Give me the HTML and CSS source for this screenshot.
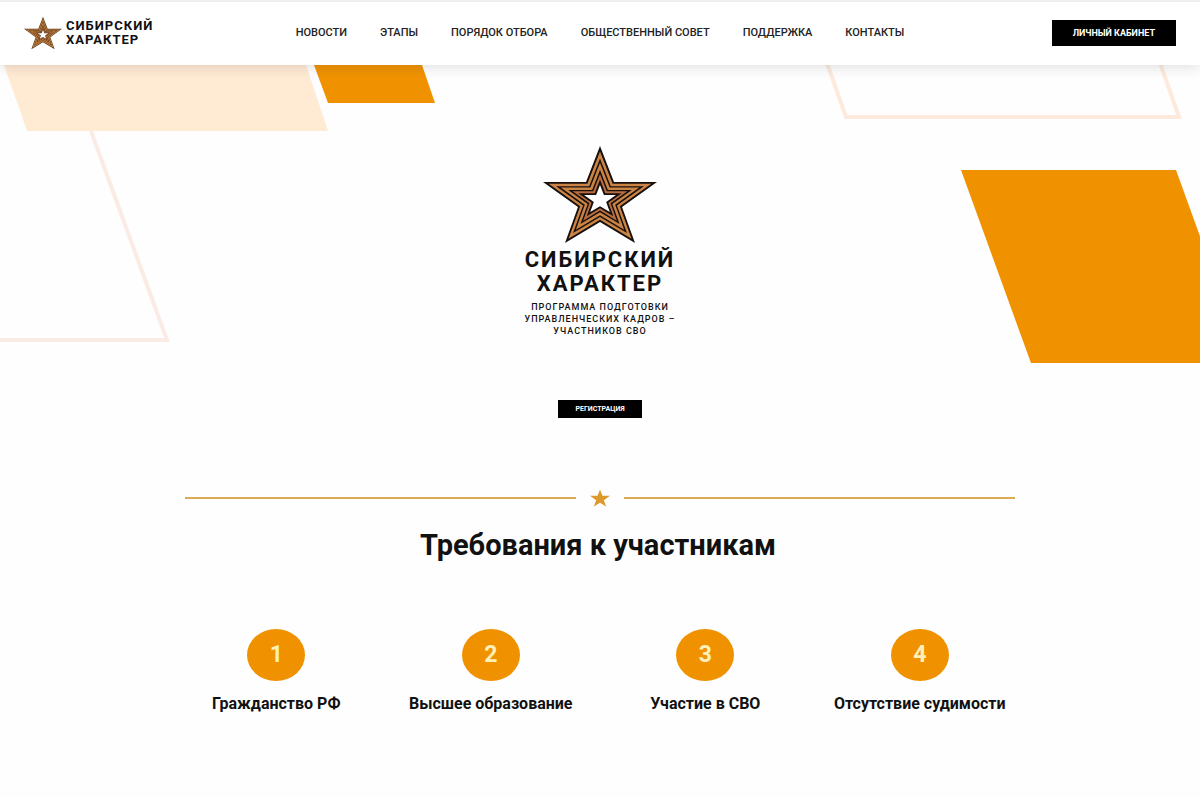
FILE: index.html
```html
<!DOCTYPE html>
<html lang="ru">
<head>
    <meta charset="UTF-8">
    <meta name="viewport" content="width=device-width, initial-scale=1.0">
    <title>Сибирский характер</title>
    <link rel="stylesheet" href="styles.css">
</head>
<body>
    <svg class="defs" width="0" height="0" aria-hidden="true">
        <defs>
            <path id="star-shape" d="M0-54 14-18 57-18 22 7 35 43 0 22-35 43-22 7-57-18-14-18Z"/>
        </defs>
        <!-- striped star, dark stripes take the text colour -->
        <symbol id="star" viewBox="-57 -54 114 97">
            <use href="#star-shape" fill="currentColor"/>
            <use href="#star-shape" fill="#cc8445" transform="scale(.9)"/>
            <use href="#star-shape" fill="currentColor" transform="scale(.77)"/>
            <use href="#star-shape" fill="#cc8445" transform="scale(.69)"/>
            <use href="#star-shape" fill="currentColor" transform="scale(.56)"/>
            <use href="#star-shape" fill="#b96d40" transform="scale(.48)"/>
            <use href="#star-shape" fill="currentColor" transform="scale(.38)"/>
            <use href="#star-shape" fill="#fff" transform="scale(.28)"/>
        </symbol>
    </svg>

    <header class="header">
        <a class="logo" href="#">
            <svg class="logo-star" aria-hidden="true"><use href="#star"/></svg>
            <span>СИБИРСКИЙ<br>ХАРАКТЕР</span>
        </a>
        <nav class="nav">
            <a href="#">НОВОСТИ</a>
            <a href="#">ЭТАПЫ</a>
            <a href="#">ПОРЯДОК ОТБОРА</a>
            <a href="#">ОБЩЕСТВЕННЫЙ СОВЕТ</a>
            <a href="#">ПОДДЕРЖКА</a>
            <a href="#">КОНТАКТЫ</a>
        </nav>
        <button class="btn btn-account" type="button">ЛИЧНЫЙ КАБИНЕТ</button>
    </header>

    <main>
        <section class="hero">
            <svg class="shapes shapes-left" viewBox="0 0 440 300" width="440" height="300" aria-hidden="true">
                <path d="M91 66 167 275H-10" fill="none" stroke="#fbebe5" stroke-width="4"/>
                <path d="M4 0H306L328 66H27Z" fill="#ffead3"/>
                <path d="M314 0H422L435 38H328Z" fill="#f09200"/>
            </svg>
            <svg class="shapes shapes-right" viewBox="0 0 380 300" width="380" height="300" aria-hidden="true">
                <path d="M7-2 26 52H359L340-2" fill="none" stroke="#fdeadd" stroke-width="4"/>
                <path d="M141 105H356L426 298H211Z" fill="#f09200"/>
            </svg>
            <svg class="hero-star" aria-hidden="true"><use href="#star"/></svg>
            <h1>СИБИРСКИЙ<br>ХАРАКТЕР</h1>
            <p class="subtitle">ПРОГРАММА ПОДГОТОВКИ<br>УПРАВЛЕНЧЕСКИХ КАДРОВ –<br>УЧАСТНИКОВ СВО</p>
            <button class="btn btn-register" type="button">РЕГИСТРАЦИЯ</button>
        </section>

        <section class="requirements">
            <div class="divider">
                <svg viewBox="-57 -54 114 97" width="20" height="18" aria-hidden="true">
                    <use href="#star-shape" fill="#dc9a2c"/>
                </svg>
            </div>
            <h2>Требования к участникам</h2>
            <ol class="steps">
                <li><span class="num">1</span>Гражданство РФ</li>
                <li><span class="num">2</span>Высшее образование</li>
                <li><span class="num">3</span>Участие в СВО</li>
                <li><span class="num">4</span>Отсутствие судимости</li>
            </ol>
        </section>
    </main>
</body>
</html>
```
FILE: styles.css
```css
* {
    box-sizing: border-box;
}
body {
    margin: 0;
    background: #fefefe;
    color: #111;
    font-family: Roboto, Arial, sans-serif;
}
.defs {
    position: absolute;
}
a {
    color: inherit;
    text-decoration: none;
}
.header {
    position: relative;
    z-index: 1;
    display: grid;
    grid-template-columns: 1fr auto 1fr;
    align-items: center;
    min-height: 65px;
    padding: 0 24px 2px;
    background: #fff;
    border-top: 2px solid #eee;
    box-shadow: 0 2px 12px rgba(40, 40, 60, 0.15);
}
.logo {
    display: flex;
    align-items: center;
    gap: 4px;
    font-size: 13px;
    line-height: 14px;
    font-weight: 700;
    letter-spacing: 1px;
}
.logo-star {
    width: 38px;
    height: 34px;
    color: #5a3a1a;
}
.nav {
    display: flex;
    gap: 33px;
    font-size: 11px;
    font-weight: 500;
    color: #222;
}
.btn {
    border: 0;
    padding: 0;
    background: #000;
    color: #fff;
    font-family: inherit;
    font-weight: 700;
    cursor: pointer;
}
.btn-account {
    justify-self: end;
    padding: 0 21px;
    height: 26px;
    font-size: 9px;
}
.hero {
    position: relative;
    overflow: hidden;
    display: flex;
    flex-direction: column;
    align-items: center;
    padding: 81px 0 71px;
    text-align: center;
}
.shapes {
    position: absolute;
    top: 0;
}
.shapes-left {
    left: 0;
}
.shapes-right {
    right: 0;
}
.hero-star {
    width: 114px;
    height: 97px;
    color: #17100d;
}
h1 {
    margin: 5px 0 0;
    font-size: 22px;
    line-height: 24px;
    letter-spacing: 2px;
}
.subtitle {
    margin: 5px 0 0;
    font-size: 9px;
    line-height: 12px;
    font-weight: 500;
    letter-spacing: 1px;
}
.btn-register {
    margin-top: 63px;
    padding: 0 17px;
    height: 18px;
    font-size: 7px;
}
.requirements {
    max-width: 878px;
    margin: 0 auto;
    padding: 0 12px 0 8px;
}
.divider {
    display: flex;
    align-items: center;
    gap: 14px;
    margin: 0 12px 0 16px;
}
.divider::before,
.divider::after {
    content: "";
    flex: 1;
    height: 2px;
    background: #d9ac54;
}
h2 {
    margin: 20px 0 0;
    font-size: 29px;
    line-height: 36px;
    text-align: center;
}
.steps {
    display: grid;
    grid-template-columns: repeat(4, 1fr);
    margin: 66px 0 0;
    padding: 0;
    list-style: none;
    text-align: center;
    font-size: 16px;
    line-height: 20px;
    font-weight: 700;
}
.num {
    display: flex;
    align-items: center;
    justify-content: center;
    width: 58px;
    height: 52px;
    margin: 0 auto 13px;
    border-radius: 50%;
    background: #f09200;
    color: #fff0b8;
    font-size: 23px;
}
```
